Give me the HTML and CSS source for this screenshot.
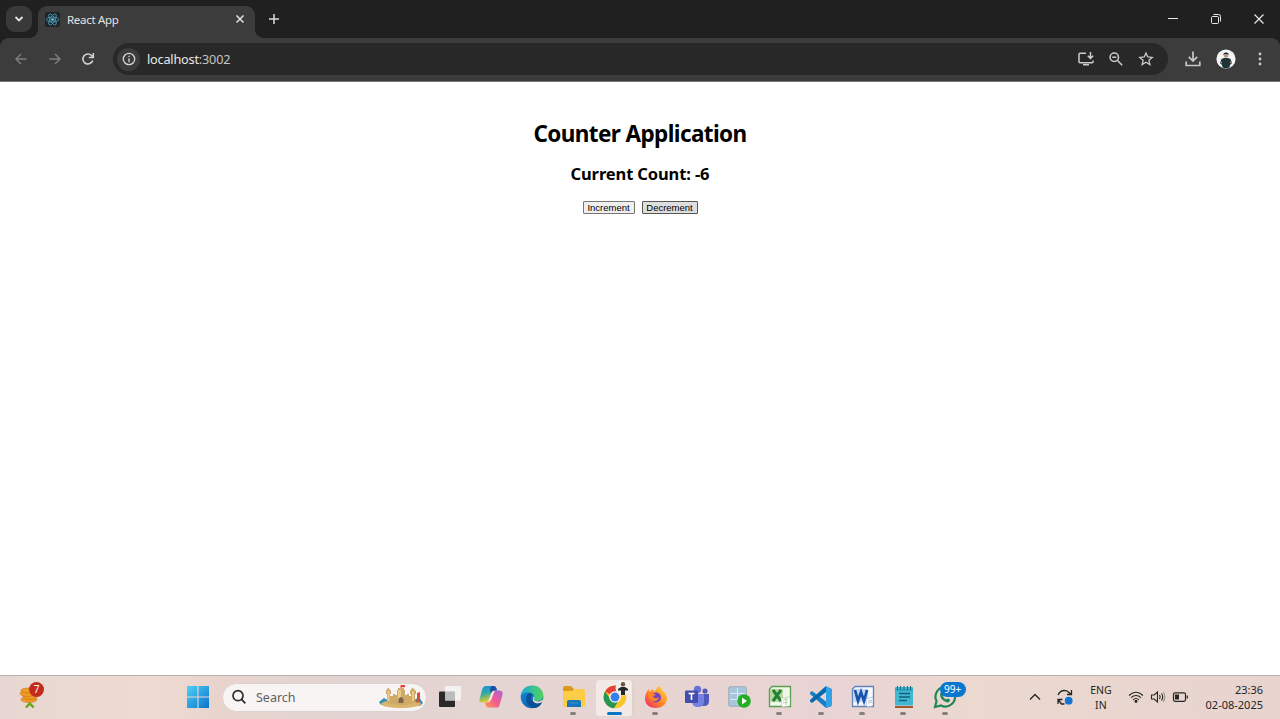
FILE: index.html
```html
<!DOCTYPE html>
<html lang="en">
<head>
<meta charset="utf-8">
<title>React App</title>
<link rel="stylesheet" href="styles.css">
</head>
<body>
<header class="tabstrip">
  <div class="tabsearch"><svg width="26" height="26" fill="none" stroke="#e3e3e3" stroke-width="1.8"><path d="M9.500 11l3.500 3.500 3.500-3.500"/></svg></div>
  <div class="tab">
    <svg class="favicon" width="15" height="15" viewBox="0 0 15 15"><rect width="15" height="15" rx="2" fill="#20232a"/><g fill="none" stroke="#4ba4ba" stroke-width=".8"><ellipse cx="7.5" cy="7.5" rx="6.2" ry="2.5"/><ellipse cx="7.5" cy="7.5" rx="6.2" ry="2.5" transform="rotate(60 7.5 7.5)"/><ellipse cx="7.5" cy="7.5" rx="6.2" ry="2.5" transform="rotate(120 7.5 7.5)"/></g><circle cx="7.5" cy="7.5" r="1.3" fill="#61dafb"/></svg>
    <span class="tab-title">React App</span>
    <svg class="tab-close" width="10" height="10" stroke="#e3e3e3" stroke-width="1.5"><path d="M1.5 1.500l7 7M8.500 1.500l-7 7"/></svg>
  </div>
  <svg class="newtab" width="12" height="12" stroke="#dcdcdc" stroke-width="1.5"><path d="M6 1v10M1 6h10"/></svg>
  <div class="window-controls">
    <svg width="12" height="12" stroke="#e8e8e8"><path d="M1 5.500h10"/></svg>
    <svg width="12" height="12" fill="none" stroke="#e8e8e8"><rect x="1.500" y="3.500" width="7" height="7" rx="1"/><path d="M3.500 1.500h5q2 0 2 2v5"/></svg>
    <svg width="12" height="12" stroke="#e8e8e8" stroke-width="1.200"><path d="M1.500 1.500l9 9M10.500 1.500l-9 9"/></svg>
  </div>
</header>
<nav class="toolbar">
  <div class="nav-icons">
    <svg width="16" height="16" fill="none" stroke="#7e7e7e" stroke-width="1.4"><path d="M13.500 8H3M8 3L3 8l5 5"/></svg>
    <svg width="16" height="16" fill="none" stroke="#7e7e7e" stroke-width="1.400"><path d="M2.500 8H13M8 3l5 5-5 5"/></svg>
    <svg width="16" height="16" fill="none" stroke="#d0d0d0" stroke-width="1.600"><path d="M12.700 9.500A5 5 0 1 1 11.500 4.500L13 6M13.300 2v4.500H8.800"/></svg>
  </div>
  <div class="omnibox">
    <span class="site-info"><svg width="14" height="14" fill="none" stroke="#d6d6d6" stroke-width="1.300"><circle cx="7" cy="7" r="5.700"/><path d="M7 6.200v4M7 3.700v1.400"/></svg></span>
    <span class="url">localhost<span class="port">:3002</span></span>
    <div class="omni-icons">
      <svg width="18" height="16" fill="none" stroke="#cbcbcb" stroke-width="1.500"><path d="M9 2.200H3q-1 0-1 1v7.600q0 1 1 1h12q1 0 1-1V9.500M6 13.800h6M13.500 1v6M10.800 4.700l2.700 2.700 2.700-2.700"/></svg>
      <svg width="16" height="16" fill="none" stroke="#cbcbcb" stroke-width="1.500"><circle cx="6.300" cy="6.200" r="4.200"/><path d="M9.500 9.500l4.700 4.700M4.300 6.200h4"/></svg>
      <svg width="16" height="16" fill="none" stroke="#cbcbcb" stroke-width="1.300"><path d="M8 2l1.800 4 4.400.400-3.300 2.900 1 4.300L8 11.300l-3.900 2.300 1-4.300L1.800 6.400 6.200 6z"/></svg>
    </div>
  </div>
  <div class="tool-icons">
    <svg width="18" height="18" fill="none" stroke="#c8c8c8" stroke-width="1.700"><path d="M9 1.500v9M4.800 6.800L9 11l4.200-4.200M2.200 11.500v4h13.600v-4"/></svg>
    <svg class="avatar" width="20" height="20" viewBox="0 0 20 20"><circle cx="10" cy="10" r="9.600" fill="#f2f5f5"/><path d="M4 14l1.500-4L8 9h4l2.500 1 1.500 4-2 2-.5 2.500q-3.500 1.500-7 0L6 16z" fill="#1f3338"/><circle cx="10" cy="6.500" r="2.300" fill="#b99585"/><path d="M7.500 6.200Q7 3.500 10 3.500t2.500 2.700l-.7-1.200H8.200z" fill="#151c1f"/><path d="M4 13l2-.5v2zM16 13l-2-.5v2z" fill="#b99585"/></svg>
    <svg width="6" height="16" fill="#c8c8c8"><circle cx="3" cy="3" r="1.400"/><circle cx="3" cy="8" r="1.400"/><circle cx="3" cy="13" r="1.400"/></svg>
  </div>
</nav>
<main class="page">
  <h1>Counter Application</h1>
  <h2>Current Count: -6</h2>
  <div class="actions"><button class="inc">Increment</button><button class="dec">Decrement</button></div>
</main>
<footer class="taskbar">
  <div class="widgets">
    <svg width="24" height="24" viewBox="0 0 24 24"><g stroke="#bf690c" stroke-width=".5" fill="#f09a25"><ellipse cx="10" cy="14.500" rx="8" ry="3"/><ellipse cx="11" cy="11.500" rx="7" ry="3"/><ellipse cx="8" cy="8.500" rx="7" ry="3"/><ellipse cx="9" cy="5.500" rx="7" ry="2.500"/></g><path d="M7 22.500l3.800-4 3.800 4" fill="none" stroke="#69a51d" stroke-width="2.500"/></svg>
    <span class="alert">7</span>
  </div>
  <div class="slot start"><svg width="22" height="22" viewBox="0 0 22 22"><defs><linearGradient id="win" x2="1" y2="1"><stop stop-color="#50cff6"/><stop offset="1" stop-color="#0874cb"/></linearGradient></defs><path fill="url(#win)" d="M0 0h10.400v10.400H0zM11.500 0H22v10.400H11.500zM0 11.500h10.400V22H0zM11.500 11.500H22V22H11.500z"/></svg></div>
  <div class="search">
    <svg width="16" height="16" fill="none" stroke="#292b2c" stroke-width="1.700"><circle cx="7" cy="6.700" r="5"/><path d="M10.600 10.400l3.700 4"/></svg>
    <span>Search</span>
    <svg class="castle" width="44" height="24" viewBox="0 0 44 24"><path d="M0 17l5-4 5 3 1 3-9 1zM34 16l6-4 4 6-3 3z" fill="#348fb1"/><ellipse cx="22" cy="19" rx="20" ry="4" fill="#d9b56c"/><path d="M8 18V9H7V6l2-3.500L12 6v3h-1v2h3V9h2v1h2V5h1V3h2v1h2V3h2v2h1v5h2V9h2v2h2V9h-1V6l2.500-3.500L37 6v3h-1v9q-14 4-28 0z" fill="#cfa968"/><path d="M8.500 6h2v10h-2zM19 5h3v9h-3zM33 6h2v10h-2z" fill="#e9cb8b"/><path d="M19.500 18v-4q2.500-4 5 0v4z" fill="#806548"/><path d="M21.500 4V0H26v2.300h-3.500V4z" fill="#e34234"/><path d="M38 8l3-1v7l-1 3-3 1 1-4z" fill="#df4b32"/></svg>
  </div>
  <div class="apps">
    <div class="slot"><svg width="24" height="24" viewBox="0 0 24 24"><rect x="1" y="6.500" width="16" height="15.500" rx="1" fill="#292929"/><rect x="7" y="1" width="16" height="14.500" rx="1" fill="#f7f7f7" opacity=".85"/><path d="M7 6.500h10v9H7z" fill="#bbb"/></svg></div>
    <div class="slot"><svg width="24" height="24" viewBox="0 0 24 24"><defs><linearGradient id="ca" x2=".3" y2="1"><stop stop-color="#168de9"/><stop offset=".5" stop-color="#32a9a0"/><stop offset="1" stop-color="#edcd20"/></linearGradient><linearGradient id="cb" x1="1" x2="0" y2="1"><stop stop-color="#ae61dc"/><stop offset=".5" stop-color="#f05c91"/><stop offset="1" stop-color="#ff984f"/></linearGradient></defs><path d="M17 22.500H9q-2 0-3-5h3q2 0 3-3l2-6q1-3 4-3h2q5 0 3 6l-2 7q-1 4-2 4z" fill="url(#cb)"/><path d="M7 1h8q2 0 3 4.500h-3q-2 0-3 3l-2 6q-1 3-4 3H4q-5 0-3-5l2-7.500q1-4 4-4z" fill="url(#ca)"/><path d="M12.500 1H15q2 0 3 4.500h-3q-2 0-3 3L11 5q0-3 1.500-4z" fill="#1851ad"/><path d="M9.500 16l3-8q.7-2 3-2l-3 8q-.7 2-3 2z" fill="#f2e6ea"/></svg></div>
    <div class="slot"><svg width="24" height="24" viewBox="0 0 24 24"><defs><linearGradient id="eg" x2="1"><stop stop-color="#1cabd8"/><stop offset="1" stop-color="#53d35b"/></linearGradient><linearGradient id="eb" x2="1" y2="1"><stop stop-color="#178bd7"/><stop offset="1" stop-color="#0754a0"/></linearGradient></defs><circle cx="12" cy="12" r="11.300" fill="url(#eb)"/><path d="M1 11C2-2 21-3 23 9c1 8-6 8-9 6-2-1 1-1 0-4C12 6 4 6 1 11z" fill="url(#eg)"/><path d="M14 11c1 3-1 3 0 4 3 2 6 2 10-1v3l-2 1q-2 1-4 1c-4 0-7-4-4-8z" fill="#e7d5d2"/><path d="M8 9c-4 5-1 13 6 14 4 0 7-3 8-6-4 3-11 1-11-5 0-2 1-2 2-2q-2-3-5-1z" fill="#0b4f98"/></svg></div>
    <div class="slot on"><svg width="24" height="24" viewBox="0 0 24 24"><path d="M1 8V3q0-2 2-2h6l3 3-2 4z" fill="#d99c1b"/><path d="M1 6h9l3-2h8q2 0 2 2v14q0 2-2 2H3q-2 0-2-2z" fill="#fccd45"/><path d="M5 22v-5q0-2 2-2h10q2 0 2 2v5z" fill="#1677bc"/><path d="M8 18h8" stroke="#3689bd" stroke-width="1.500"/></svg></div>
    <div class="slot on active"><svg width="24" height="24" viewBox="0 0 24 24"><circle cx="12" cy="12" r="11.300" fill="#fbc528"/><path d="M12 12L2 6.500A11.300 11.300 0 0 1 22 6.500L12 12z" fill="#e24332"/><path d="M2 6.500A11.300 11.300 0 0 0 11 23.300l5-8.500-8 0z" fill="#259750"/><path d="M12 6.500h10q2 5 0 10l-5 5-2-7z" fill="#fbc528"/><circle cx="12" cy="12" r="5.800" fill="#fff"/><circle cx="12" cy="12" r="4.500" fill="#377fea"/></svg><svg class="profile" width="16" height="16" viewBox="0 0 16 16"><circle cx="8" cy="8" r="7.500" fill="#f2eeeb"/><path d="M3 9l3-2h4l3 2v1.500h-3V15H6v-4.500H3z" fill="#202629"/><circle cx="8" cy="4.300" r="2.200" fill="#6c5145"/></svg></div>
    <div class="slot on"><svg width="24" height="24" viewBox="0 0 24 24"><defs><linearGradient id="ff" x1="1" x2="0" y2="1"><stop stop-color="#ffe044"/><stop offset=".5" stop-color="#ff8a27"/><stop offset="1" stop-color="#ed256c"/></linearGradient></defs><path d="M14 1q4 2 5 5 4 3 4 8c-1 12-22 12-22 0q0-6 4-10v3l4-3 1 3q3-3 4-6z" fill="url(#ff)"/><circle cx="12" cy="12.500" r="5" fill="#7144c6"/><path d="M4 8q5-1 8 2l-3 1q1 4 6 1-1 5-6 4-5-1-5-8z" fill="#ff8528"/></svg></div>
    <div class="slot"><svg width="24" height="24" viewBox="0 0 24 24"><circle cx="12.500" cy="4.500" r="3.700" fill="#6870d1"/><circle cx="20" cy="6" r="2.600" fill="#5159b5"/><path d="M15 9h9v7q0 5-5 5h-3z" fill="#5059bb"/><path d="M7 9h12v8q0 5-6 5-6 0-6-6z" fill="#777fe0"/><rect y="5.500" width="13" height="12.500" rx="1" fill="#434dad"/><path d="M3.500 8.500h6M6.500 8.500V15" stroke="#fff" stroke-width="1.600"/></svg></div>
    <div class="slot"><svg width="24" height="24" viewBox="0 0 24 24"><rect x="2" y="2" width="17" height="19" rx="1" fill="#dfeaf4" stroke="#6f94b0"/><path d="M3 3h7v5H3zM11 3h7v5h-7zM3 9h7v5H3zM11 9h7v5h-7zM3 15h7v5H3zM11 15h7v5h-7z" fill="#a5c6dd"/><circle cx="17" cy="16" r="6.800" fill="#22af22"/><path d="M15 12.500l5 3.500-5 3.500z" fill="#fff"/></svg></div>
    <div class="slot on"><svg width="24" height="24" viewBox="0 0 24 24"><path d="M4 1.500h18.500v20h-21V4z" fill="#eff7e9" stroke="#599d51" stroke-width="1.300"/><path d="M2 4h13v13H2z" fill="#b6d99c"/><path d="M5 5l8 11M13 5L5 16" stroke="#238038" stroke-width="3"/><path d="M13 13l9-1v9l-8 1z" fill="#fff" stroke="#93b987" stroke-width=".5"/><path d="M15 15l5-1M15 18l5-1M18 13v7" stroke="#b5cda9"/></svg></div>
    <div class="slot on"><svg width="24" height="24" viewBox="0 0 24 24"><path d="M1 7.500L3 6l20 15-6 2L1 9z" fill="#1780c4"/><path d="M1 16.500L3 18l14-11V1L1 15z" fill="#0869ad"/><path d="M17 1l6 3v16l-6 3z" fill="#30a3e6"/></svg></div>
    <div class="slot on"><svg width="24" height="24" viewBox="0 0 24 24"><path d="M4 1.500h18.500v20h-21V4z" fill="#f4f7fc" stroke="#6481b9" stroke-width="1.300"/><path d="M2 4h15v13H2z" fill="#c5d7f0"/><path d="M4 5l3 11 3-9 3 9 3-11" fill="none" stroke="#1654ae" stroke-width="2.700"/><path d="M15 14l7-2v9l-6 1z" fill="#fff" stroke="#829bc8" stroke-width=".5"/><path d="M17 16l4-1M17 18l4-1" stroke="#a3b5d7"/></svg></div>
    <div class="slot on"><svg width="24" height="24" viewBox="0 0 24 24"><path d="M3 21h18v2H3z" fill="#a4562c"/><rect x="3" y="2" width="18" height="18.500" rx="1" fill="#42b7d2"/><path d="M3 5h18" stroke="#238fae"/><path d="M5.500 1v4M8.500 1v4M12 1v4M15.500 1v4M18.500 1v4" stroke="#176982"/><path d="M7 8.500h11M7 12h11M7 15.500h8" stroke="#11617b" stroke-width="1.500"/></svg></div>
    <div class="slot on"><svg width="24" height="24" viewBox="0 0 24 24"><path d="M2 22l1.500-6A9.800 9.800 0 1 1 8 20.500z" fill="none" stroke="#218557" stroke-width="2.200"/><path d="M8 7l2 .5 1 2.500-1 1.500q1 2 3 3l1.500-1 2.500 1q0 3-3 3Q7 15 7 9z" fill="#218557"/></svg><span class="count">99+</span></div>
  </div>
  <div class="tray">
    <svg width="12" height="8" fill="none" stroke="#252525" stroke-width="1.300"><path d="M1 6.500l5-5 5 5"/></svg>
    <svg width="18" height="18" viewBox="0 0 18 18" fill="none" stroke="#252525" stroke-width="1.300"><path d="M2 7q3-6 9-4l4 3M15.500 2v4.500H11M2 16v-4.500h4.500M2.500 12l3 4h3"/><circle cx="12.700" cy="12.700" r="3.900" fill="#1476d4" stroke="none"/></svg>
    <div class="language">ENG<br>IN</div>
    <div class="status">
      <svg width="16" height="14" fill="none" stroke="#262626" stroke-width="1.100"><path d="M1 5.500q7-6.500 14 0M3 7.700q5-4.500 10 0M5 9.900q3-2.700 6 0"/><circle cx="8" cy="11.300" r="1" fill="#262626"/></svg>
      <svg width="16" height="14" fill="none" stroke="#262626" stroke-width="1.100"><path d="M1.500 5h2.700L7.500 2v10L4.200 9H1.500zM9.500 5q1.500 2 0 4M11.500 3.500q2.500 3.500 0 7"/><path d="M13.300 2q3 5 0 10" stroke="#9a918f"/></svg>
      <svg width="17" height="12" fill="none" stroke="#262626" stroke-width="1.200"><rect x="1.500" y="1.800" width="12" height="8.500" rx="1.500"/><path d="M15.300 4.500v3"/><path d="M3 3.500h4v5H3z" fill="#262626" stroke="none"/></svg>
    </div>
    <div class="clock">23:36<br>02-08-2025</div>
  </div>
</footer>
</body>
</html>
```

FILE: styles.css
```css
* { box-sizing: border-box; }
body {
  margin: 0;
  height: 719px;
  display: flex;
  flex-direction: column;
  overflow: hidden;
  background: #fff;
  font-family: "Noto Sans", sans-serif;
}
svg { display: block; flex: none; }
.tabstrip { height: 38px; flex: none; display: flex; background: #202020; padding: 6px 15px 0 6px; }
.tabsearch { width: 26px; height: 26px; border-radius: 9px; background: #393939; }
.tab {
  position: relative;
  width: 217px;
  height: 32px;
  margin-left: 6px;
  padding: 0 10px 6px 7px;
  display: flex;
  align-items: center;
  background: #3c3c3c;
  border-radius: 9px 9px 0 0;
}
.tab::before, .tab::after { content: ""; position: absolute; bottom: 0; width: 8px; height: 8px; }
.tab::before { left: -8px; background: radial-gradient(circle at 0 0, transparent 7.5px, #3c3c3c 8px); }
.tab::after { right: -8px; background: radial-gradient(circle at 100% 0, transparent 7.5px, #3c3c3c 8px); }
.tab-title { margin-left: 7px; font-size: 11.5px; color: #e3e3e3; letter-spacing: -.3px; }
.tab-close { margin-left: auto; }
.newtab { margin: 7px 0 0 13px; }
.window-controls { display: flex; gap: 31px; margin: 7px 0 0 auto; }
.toolbar {
  height: 44px;
  flex: none;
  display: flex;
  align-items: center;
  padding-bottom: 1px;
  border-bottom: 1px solid #777;
  background:
    radial-gradient(circle at 8px 8px, #3c3c3c 7.5px, #202020 8px) 0 0 / 8px 8px no-repeat,
    radial-gradient(circle at 0 8px, #3c3c3c 7.5px, #202020 8px) 100% 0 / 8px 8px no-repeat,
    #3c3c3c;
}
.nav-icons { display: flex; gap: 17.5px; width: 113px; padding-left: 13px; }
.omnibox { width: 1055px; height: 32px; border-radius: 16px; background: #282828; display: flex; align-items: center; padding: 0 14px 0 4px; }
.site-info { width: 23px; height: 23px; border-radius: 50%; background: #3c3c3c; display: grid; place-items: center; }
.url { margin-left: 7px; font-size: 12.7px; color: #e8e8e8; letter-spacing: -.2px; }
.port { color: #c4c4c4; }
.omni-icons { display: flex; margin-left: auto; align-items: center; gap: 14px; }
.omni-icons svg:first-child { margin-right: -1px; }
.tool-icons { display: flex; align-items: center; padding-left: 16px; }
.avatar { margin: 0 21px 0 14px; }
.page { flex: 1; display: flex; flex-direction: column; align-items: center; padding-top: 36px; color: #000; }
h1 { margin: 0; font-size: 22.5px; line-height: 32px; letter-spacing: -.6px; white-space: nowrap; }
h2 { margin: 12px 0 0; font-size: 16.5px; line-height: 24px; letter-spacing: -.12px; white-space: nowrap; }
.actions { display: flex; gap: 7px; margin-top: 15px; }
button { height: 13px; border: 1px solid #777; border-radius: 1px; padding: 0; background: #efefef; color: #000; font: 9.5px/11px "Liberation Sans", Arial, sans-serif; }
.inc { width: 52px; }
.dec { width: 56px; background: #dedede; border-color: #555; }
.taskbar { height: 44px; flex: none; display: flex; align-items: center; padding-bottom: 1px; border-top: 1px solid #b8b1af; background: linear-gradient(90deg, #e8d6d2, #eddbd2 12%, #e8d4cd 17%, #e2d4d2 27%, #e7d5d2 50%, #e8d4d4 65%, #ebd8cf 76%, #e7d4cf); }
.widgets { position: relative; width: 178px; padding-left: 19px; }
.alert { position: absolute; left: 29px; top: -3px; width: 15px; height: 15px; border-radius: 50%; background: #c42b1c; color: #fff; font-size: 10px; line-height: 15px; text-align: center; }
.slot { position: relative; flex: none; width: 41.3px; height: 42px; display: grid; place-items: center; }
.slot.start { width: 40px; }
.slot.on::after { content: ""; position: absolute; left: 17px; bottom: 3px; width: 6px; height: 3px; border-radius: 2px; background: #85807e; }
.active > svg { z-index: 1; }
.active::before { content: ""; position: absolute; left: 2px; top: 4px; width: 36px; height: 36px; border-radius: 4px; background: #f3e9e7; border-right: 2px solid #dfd1ce; }
.slot.active::after { left: 13px; width: 15px; background: #0876c7; }
.profile { position: absolute; left: 21px; top: 4px; }
.search { width: 205px; height: 29px; margin: 0 2px 0 4px; border-radius: 15px; background: #f7f4f3; border: 1px solid #ddd2d0; display: flex; align-items: center; padding: 0 3px 0 8px; font-size: 12.5px; color: #62605f; }
.search span { margin-left: 9px; }
.castle { margin-left: auto; }
.apps { display: flex; flex: none; }
.count { position: absolute; left: 15px; top: 6px; width: 26px; height: 15px; border-radius: 8px; background: #0877d2; color: #fff; font-size: 10px; line-height: 14px; text-align: center; z-index: 2; }
.tray { flex: 1; display: flex; align-items: center; padding-right: 17px; font-size: 10.5px; line-height: 15px; color: #252525; }
.tray > svg:first-child { margin-left: 63px; }
.tray > svg:nth-child(2) { margin-left: 15px; }
.language { width: 28px; margin-left: 13px; padding-top: 1px; text-align: center; }
.status { display: flex; align-items: center; gap: 6px; margin-left: 13px; }
.clock { margin-left: auto; text-align: right; white-space: nowrap; font-size: 11px; }
```
